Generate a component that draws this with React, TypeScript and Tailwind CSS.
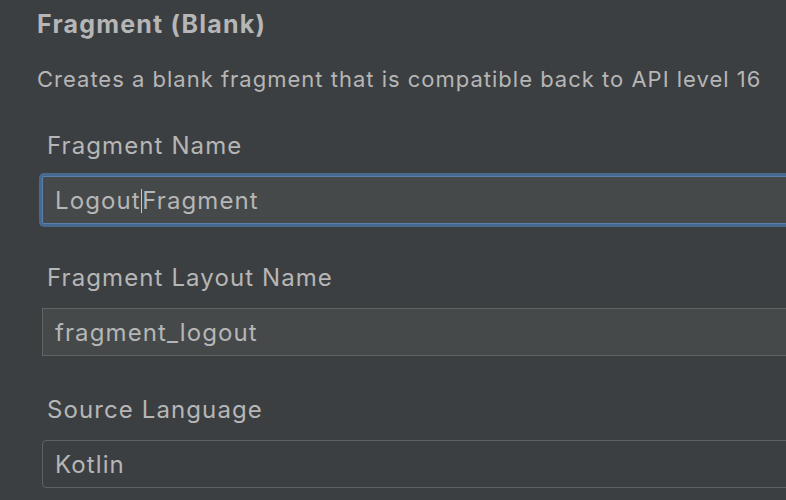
const font = { fontFamily: "Inter, 'Open Sans', sans-serif" };

function Label({ text, className = "" }: { text: string; className?: string }) {
  return (
    <div className={`ml-[47px] h-[30px] leading-[30px] text-[24px] tracking-[1.1px] text-[#b6b6b6] ${className}`}>
      {text}
    </div>
  );
}

export default function App() {
  return (
    <div className="w-[786px] h-[500px] overflow-hidden bg-[#3c3f41]" style={font}>
      <div className="flex flex-col">
        {/* Header */}
        <div className="ml-[37px] mt-[8px] h-[32px] leading-[32px] text-[25px] tracking-[1.2px] font-bold text-[#b6b6b6]">
          Fragment (Blank)
        </div>
        <div className="ml-[37px] mt-[24px] h-[30px] leading-[30px] text-[22px] tracking-[1px] text-[#b6b6b6] whitespace-nowrap">
          Creates a blank fragment that is compatible back to API level 16
        </div>

        {/* Fragment Name */}
        <Label text="Fragment Name" className="mt-[37px]" />
        <div className="ml-[42px] mt-[15px] w-[800px] h-[48px] bg-[#45494a] border border-[#5c80ad] shadow-[0_0_0_3px_#48698f] rounded-[2px] flex items-center pl-[12px] pt-[2px] text-[24px] tracking-[1.1px] text-[#b6b6b6]">
          <span>Logout</span>
          <span className="w-[1.5px] h-[24px] bg-[#c8c8c8]" />
          <span>Fragment</span>
        </div>

        {/* Layout Name */}
        <Label text="Fragment Layout Name" className="mt-[39px]" />
        <div className="ml-[42px] mt-[15px] w-[800px] h-[48px] bg-[#45494a] border border-[#646464] flex items-center pl-[12px] pt-[2px] text-[24px] tracking-[1.1px] text-[#b6b6b6]">
          fragment_logout
        </div>

        {/* Source Language */}
        <Label text="Source Language" className="mt-[39px]" />
        <div className="ml-[42px] mt-[15px] w-[800px] h-[48px] bg-[#3c3f41] border border-[#5e6060] rounded-[4px] flex items-center pl-[12px] pt-[2px] text-[24px] tracking-[1.1px] text-[#b6b6b6]">
          Kotlin
        </div>
      </div>
    </div>
  );
}
